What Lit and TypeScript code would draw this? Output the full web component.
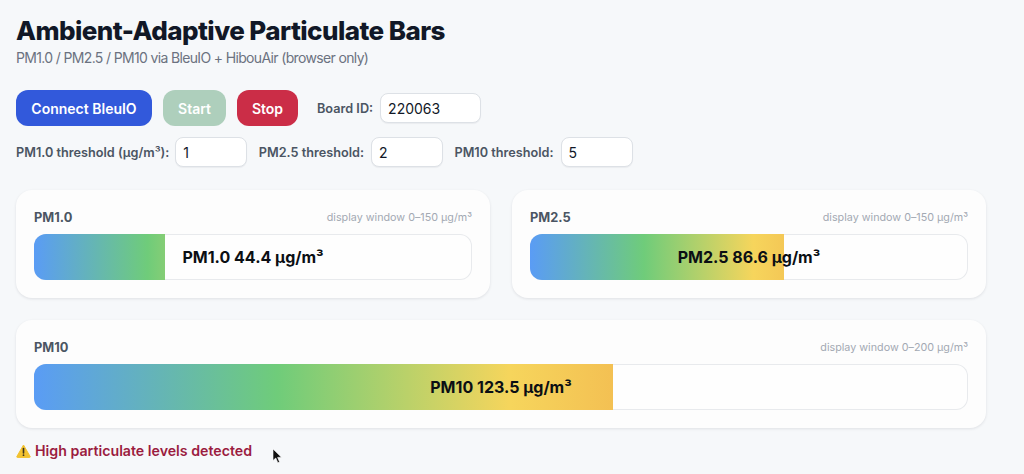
import { LitElement, html, css } from "lit";
import { customElement } from "lit/decorators.js";

const BARS = [
  { name: "PM1.0", value: 44.4, max: 150 },
  { name: "PM2.5", value: 86.6, max: 150 },
  { name: "PM10", value: 123.5, max: 200 },
];

@customElement("app-root")
export class AppRoot extends LitElement {
  static styles = css`
    :host {
      display: block;
      height: 474px;
      overflow: hidden;
      position: relative;
      background: #f6f8fa;
      font-family: Inter, "Liberation Sans", sans-serif;
      color: #111827;
    }
    .page {
      padding: 14px 38px 0 16px;
    }
    h1 {
      margin: 0;
      font-size: 26px;
      line-height: 33px;
      font-weight: 800;
      letter-spacing: -0.56px;
      color: #111827;
    }
    .sub {
      margin-top: 1px;
      font-size: 14px;
      line-height: 20px;
      letter-spacing: -0.65px;
      color: #6b7280;
    }
    .controls {
      display: flex;
      align-items: center;
      gap: 11px;
      margin-top: 22px;
    }
    button {
      height: 36px;
      border: none;
      border-radius: 12px;
      font: 600 14px Inter, "Liberation Sans", sans-serif;
      color: #fff;
      padding: 0;
    }
    .connect {
      width: 136px;
      background: #3259db;
    }
    .start {
      width: 63px;
      background: #aecfbc;
    }
    .stop {
      width: 61px;
      background: #cb2d47;
    }
    .thresholds {
      display: flex;
      align-items: center;
      gap: 11.5px;
      margin-top: 11px;
    }
    .thresholds label:first-child {
      gap: 6px;
    }
    label {
      display: flex;
      align-items: center;
      gap: 7px;
      font-size: 12.7px;
      font-weight: 600;
      color: #4b5563;
      white-space: nowrap;
    }
    .board {
      margin-left: 8px;
    }
    .board input {
      width: 101px;
    }
    input {
      box-sizing: border-box;
      width: 72px;
      height: 30px;
      border: 1px solid #dde1e6;
      border-radius: 8px;
      background: #fff;
      padding: 0 7px;
      font: 400 14px Inter, "Liberation Sans", sans-serif;
      color: #111827;
      box-shadow: 0 1px 1px rgba(15, 23, 42, 0.05);
    }
    .grid {
      display: grid;
      grid-template-columns: 1fr 1fr;
      gap: 22px;
      margin-top: 23px;
    }
    .card {
      box-sizing: border-box;
      height: 108px;
      padding: 18px;
      background: #fdfdfd;
      border-radius: 16px;
      box-shadow: 0 1px 3px rgba(15, 23, 42, 0.1);
    }
    .wide {
      grid-column: 1 / 3;
    }
    .head {
      display: flex;
      justify-content: space-between;
      align-items: center;
      height: 18px;
      margin-bottom: 8px;
    }
    .name {
      font-size: 12.8px;
      font-weight: 700;
      color: #4b5563;
    }
    .window {
      font-size: 10.75px;
      color: #a3a9b3;
    }
    .bar {
      position: relative;
      height: 46px;
      border-radius: 12px;
      background: #fefefe;
      box-shadow: inset 0 0 0 1px #e8eaed;
      overflow: hidden;
    }
    .fill {
      height: 100%;
      background-image: linear-gradient(
        90deg,
        #5a9cf5 0%,
        #6fcc7a 26%,
        #f6d55c 51%,
        #f0a848 75%,
        #e5604a 100%
      );
      background-repeat: no-repeat;
    }
    .value {
      position: absolute;
      inset: 0;
      display: flex;
      align-items: center;
      justify-content: center;
      font-size: 16px;
      font-weight: 700;
      color: #0b0f14;
    }
    .alert {
      display: flex;
      align-items: center;
      gap: 4px;
      margin-top: 14px;
      font-size: 14.2px;
      line-height: 18px;
      font-weight: 600;
      color: #9b1c3f;
    }
    .cursor {
      position: absolute;
      left: 272px;
      top: 448px;
    }
  `;

  renderBar(b: { name: string; value: number; max: number }, wide = false) {
    const pct = Math.round((b.value / b.max) * 100);
    return html`
      <div class="card ${wide ? "wide" : ""}">
        <div class="head">
          <span class="name">${b.name}</span>
          <span class="window">display window 0–${b.max} µg/m³</span>
        </div>
        <div class="bar">
          <div
            class="fill"
            style="width:${pct}%;background-size:${(100 / pct) * 100}% 100%"
          ></div>
          <div class="value">${b.name} ${b.value} µg/m³</div>
        </div>
      </div>
    `;
  }

  render() {
    return html`
      <div class="page">
        <h1>Ambient-Adaptive Particulate Bars</h1>
        <div class="sub">PM1.0 / PM2.5 / PM10 via BleuIO + HibouAir (browser only)</div>

        <div class="controls">
          <button class="connect">Connect BleuIO</button>
          <button class="start">Start</button>
          <button class="stop">Stop</button>
          <label class="board">Board ID: <input value="220063" /></label>
        </div>

        <div class="thresholds">
          <label>PM1.0 threshold (µg/m³): <input value="1" /></label>
          <label>PM2.5 threshold: <input value="2" /></label>
          <label>PM10 threshold: <input value="5" /></label>
        </div>

        <div class="grid">
          ${this.renderBar(BARS[0])} ${this.renderBar(BARS[1])} ${this.renderBar(BARS[2], true)}
        </div>

        <div class="alert">
          <svg width="15" height="14" viewBox="0 0 15 14">
            <path
              d="M7.5 1 L14.2 12.6 Q14.4 13.4 13.6 13.4 L1.4 13.4 Q0.6 13.4 0.8 12.6 Z"
              fill="#f2c230"
              stroke="#f2c230"
              stroke-linejoin="round"
            />
            <path d="M7.5 4.5 V9" stroke="#3a3420" stroke-width="1.6" stroke-linecap="round" />
            <circle cx="7.5" cy="11.2" r="0.9" fill="#3a3420" />
          </svg>
          High particulate levels detected
        </div>
      </div>

      <svg class="cursor" width="11" height="17" viewBox="0 0 11 17">
        <path
          d="M1 1 L1 12.5 L3.8 10 L5.8 14.8 L7.6 14 L5.6 9.4 L9.4 9.2 Z"
          fill="#111"
          stroke="#fff"
          stroke-width="0.6"
        />
      </svg>
    `;
  }
}
